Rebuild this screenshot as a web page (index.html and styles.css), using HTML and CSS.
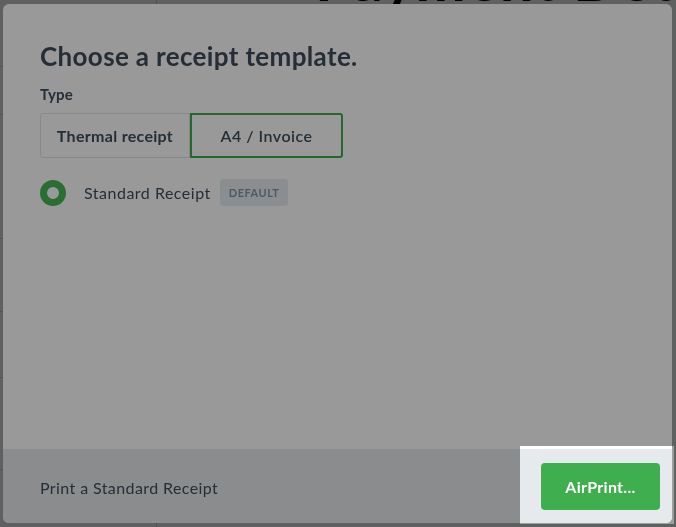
FILE: index.html
```html
<!DOCTYPE html>
<html lang="en">
<head>
    <meta charset="UTF-8">
    <meta name="viewport" content="width=device-width, initial-scale=1.0">
    <title>Choose a receipt template</title>
    <link rel="stylesheet" href="styles.css">
</head>
<body>
    <!-- page behind the modal -->
    <div class="page">
        <div class="sidebar">
            <div class="row" style="height: 67px"></div>
            <div class="row" style="height: 48px"></div>
            <div class="row" style="height: 124px"></div>
            <div class="row" style="height: 73px"></div>
            <div class="row" style="height: 66px"></div>
            <div class="row" style="height: 92px"></div>
        </div>
        <div class="main">
            <h1 class="page-title">Payment Details</h1>
        </div>
    </div>

    <div class="modal">
        <div class="modal-body">
            <h2>Choose a receipt template.</h2>
            <div class="label">Type</div>
            <div class="segmented">
                <button class="seg">Thermal receipt</button>
                <button class="seg active">A4 / Invoice</button>
            </div>
            <div class="template">
                <span class="radio"></span>
                <span class="template-name">Standard Receipt</span>
                <span class="badge">DEFAULT</span>
            </div>
        </div>
        <div class="modal-footer">
            <span class="footer-text">Print a Standard Receipt</span>
            <button class="print-btn">AirPrint...</button>
        </div>
    </div>

    <!-- tutorial spotlight over the print button -->
    <div class="spotlight"></div>
</body>
</html>
```

FILE: styles.css
```css
body {
    margin: 0;
    font-family: Lato, "Open Sans", sans-serif;
    background-color: #9ea0a0;
    overflow: hidden;
}
.page {
    display: flex;
    height: 527px;
    overflow: hidden;
}
.sidebar {
    flex-shrink: 0;
    width: 156px;
    border-right: 1px solid #848787;
}
.sidebar .row {
    border-bottom: 1px solid #878a8a;
    box-sizing: border-box;
}
.main {
    flex: 1;
    min-width: 0;
    overflow: hidden;
    padding-left: 158px;
}
.page-title {
    margin: -58px 0 0;
    font-size: 60px;
    font-weight: 700;
    letter-spacing: 1px;
    white-space: nowrap;
    color: #000;
}

.modal {
    position: fixed;
    left: 3px;
    top: 4px;
    width: 669px;
    height: 519px;
    background: #ffffff;
    border-radius: 6px;
    display: flex;
    flex-direction: column;
    overflow: hidden;
}
.modal-body {
    flex: 1;
    padding: 36px 37px 0;
}
h2 {
    margin: 0;
    font-size: 26px;
    font-weight: 700;
    letter-spacing: 0.35px;
    color: #3e4e5c;
}
.label {
    margin-top: 13px;
    font-size: 15px;
    font-weight: 700;
    letter-spacing: 0.2px;
    color: #3e4e5c;
}
.segmented {
    display: flex;
    margin-top: 10px;
}
.seg {
    height: 45px;
    font-family: Lato, sans-serif;
    font-size: 16px;
    font-weight: 700;
    letter-spacing: 0.3px;
    color: #3e4e5c;
    background: #fff;
    border: 1px solid #dfe3e6;
    border-radius: 3px 0 0 3px;
    width: 150px;
    padding: 0;
}
.seg.active {
    width: 153px;
    border: 2px solid #3fae4e;
    border-radius: 0 3px 3px 0;
    font-weight: 600;
    letter-spacing: 0.5px;
}
.template {
    display: flex;
    align-items: center;
    margin-top: 21px;
}
.radio {
    width: 12px;
    height: 12px;
    border: 7px solid #46b855;
    border-radius: 50%;
    background: #fff;
}
.template-name {
    margin-left: 18px;
    font-size: 16px;
    letter-spacing: 0.5px;
    color: #3e4e5c;
}
.badge {
    margin-left: 9px;
    padding: 0 9px;
    height: 27px;
    line-height: 27px;
    background: #e8edf1;
    border-radius: 3px;
    font-size: 11px;
    font-weight: 700;
    letter-spacing: 0.5px;
    color: #7d96a8;
}
.modal-footer {
    height: 74px;
    background: #e7eaec;
    display: flex;
    align-items: center;
    justify-content: space-between;
    padding: 0 12px 0 37px;
}
.footer-text {
    font-size: 16px;
    letter-spacing: 0.4px;
    color: #3e4e5c;
    margin-top: 2px;
}
.print-btn {
    width: 119px;
    height: 47px;
    background: #3fae4e;
    color: #fff;
    border: none;
    border-radius: 4px;
    font-family: Lato, sans-serif;
    font-size: 16px;
    font-weight: 700;
    letter-spacing: 0.3px;
}
.spotlight {
    position: fixed;
    left: 520px;
    top: 446px;
    width: 154px;
    height: 78px;
    box-shadow: 0 0 0 1200px rgba(0, 0, 0, 0.4);
    pointer-events: none;
}
```
